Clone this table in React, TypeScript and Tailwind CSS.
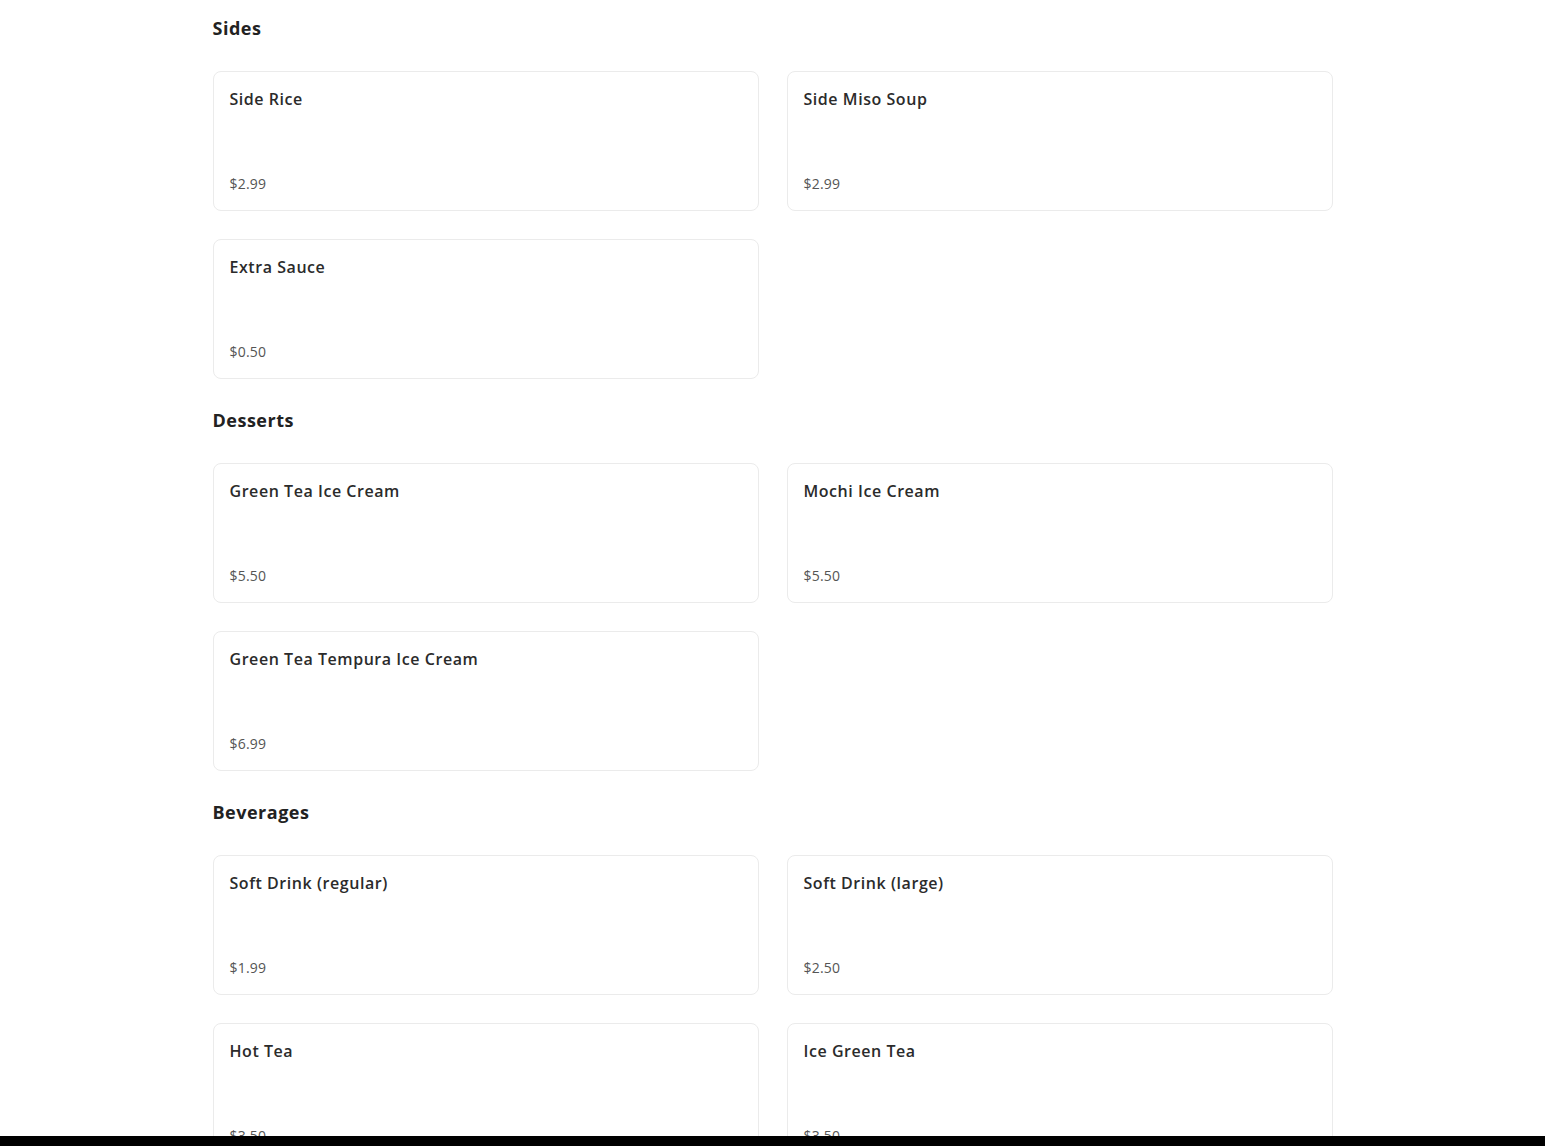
import React from "react";

type Item = { name: string; price: string };
const sections: { title: string; items: Item[] }[] = [
  {
    title: "Sides",
    items: [
      { name: "Side Rice", price: "$2.99" },
      { name: "Side Miso Soup", price: "$2.99" },
      { name: "Extra Sauce", price: "$0.50" },
    ],
  },
  {
    title: "Desserts",
    items: [
      { name: "Green Tea Ice Cream", price: "$5.50" },
      { name: "Mochi Ice Cream", price: "$5.50" },
      { name: "Green Tea Tempura Ice Cream", price: "$6.99" },
    ],
  },
  {
    title: "Beverages",
    items: [
      { name: "Soft Drink (regular)", price: "$1.99" },
      { name: "Soft Drink (large)", price: "$2.50" },
      { name: "Hot Tea", price: "$3.50" },
      { name: "Ice Green Tea", price: "$3.50" },
    ],
  },
];

export default function App() {
  return (
    <div
      className="min-h-screen bg-white"
      style={{ fontFamily: '"Open Sans", "Noto Sans", sans-serif' }}
    >
      <div className="mx-auto w-[1120px] pt-[14px] pb-10 flex flex-col gap-[27px]">
        {sections.map((s) => (
          <section key={s.title}>
            <h2 className="h-7 text-[18px] leading-7 font-bold text-[#222222] tracking-[0.5px] mb-[29px]">
              {s.title}
            </h2>
            <div className="grid grid-cols-2 gap-7">
              {s.items.map((it) => (
                <div
                  key={it.name}
                  className="h-[140px] rounded-lg border border-[#ebebeb] bg-white p-4 flex flex-col justify-between"
                >
                  <div className="text-[16px] leading-6 font-semibold text-[#2b2b2b] tracking-[0.55px] -mt-px">
                    {it.name}
                  </div>
                  <div className="text-[14px] leading-5 font-normal text-[#555555] tracking-[0.2px] -mt-px">
                    {it.price}
                  </div>
                </div>
              ))}
            </div>
          </section>
        ))}
      </div>
      <div className="fixed bottom-0 left-0 right-0 h-[10px] bg-black" />
    </div>
  );
}
